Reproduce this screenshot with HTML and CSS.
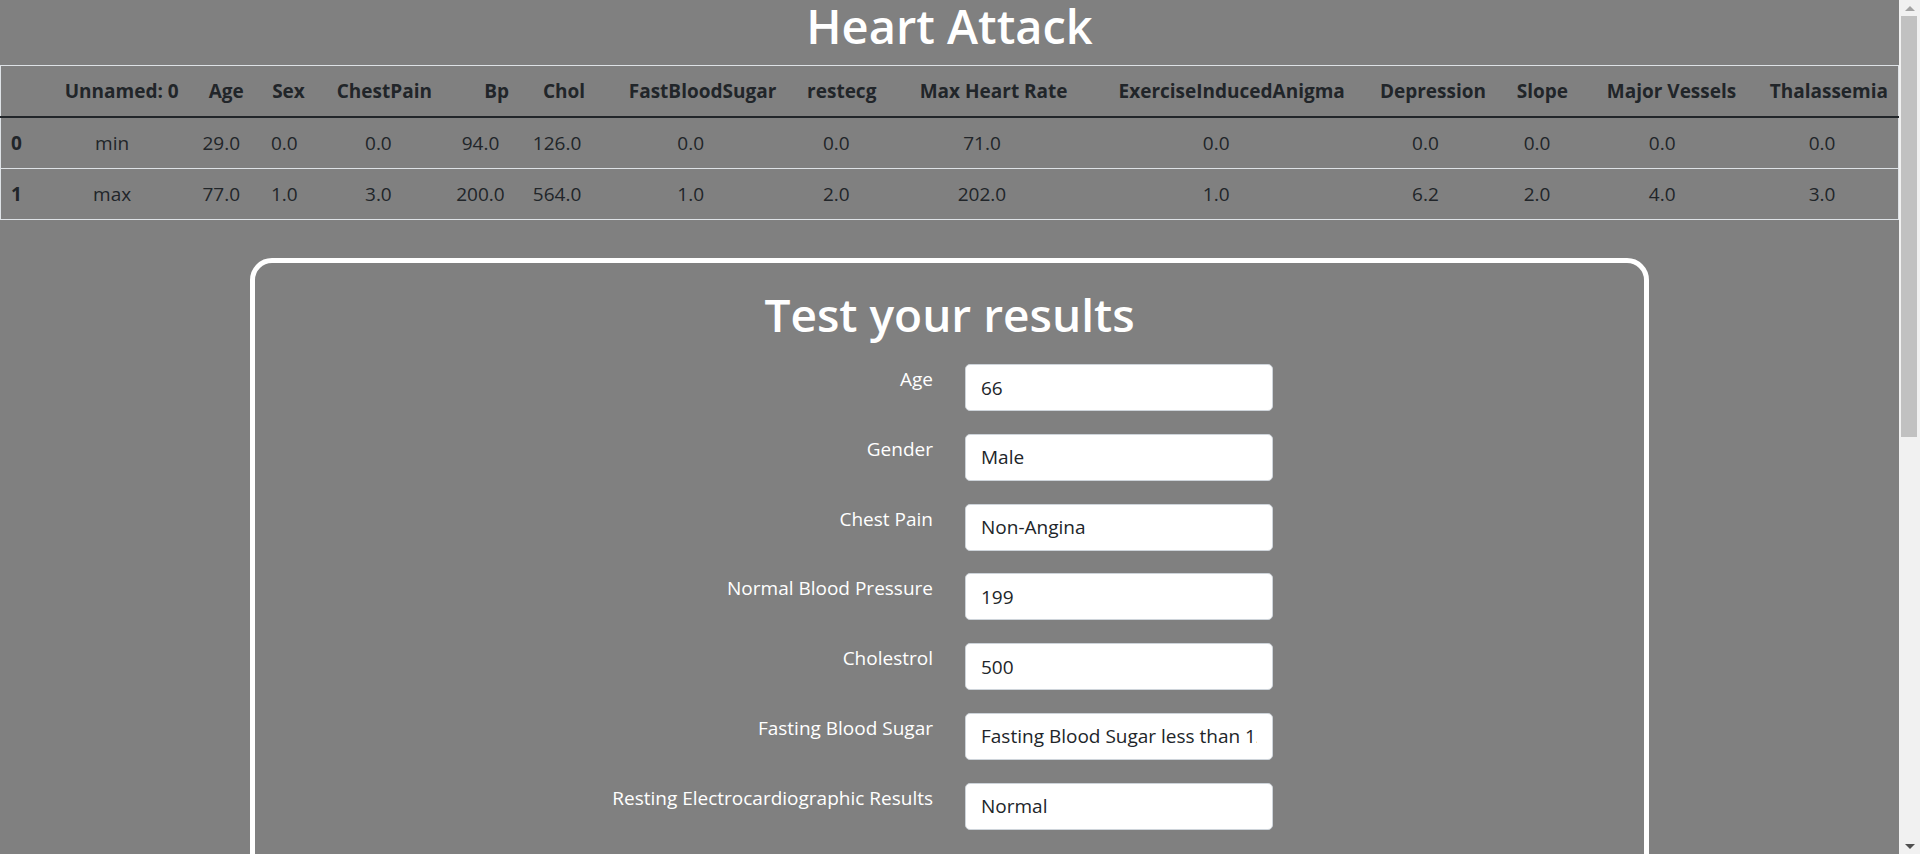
FILE: index.html
```html
<!DOCTYPE html>
<html lang="en">
<head>
<meta charset="utf-8">
<title>Heart Attack</title>
<link rel="stylesheet" href="styles.css">
</head>
<body>
<main class="page">
  <h1 class="page-title">Heart Attack</h1>
  <table class="data-table" border="1">
    <colgroup>
      <col class="c-idx"><col class="c-unnamed"><col class="c-age"><col class="c-sex"><col class="c-cp"><col class="c-bp"><col class="c-chol"><col class="c-fbs"><col class="c-rest"><col class="c-mhr"><col class="c-eia"><col class="c-dep"><col class="c-slope"><col class="c-mv"><col class="c-thal">
    </colgroup>
    <thead>
      <tr>
        <th></th><th>Unnamed: 0</th><th>Age</th><th>Sex</th><th>ChestPain</th><th>Bp</th><th>Chol</th><th>FastBloodSugar</th><th>restecg</th><th>Max Heart Rate</th><th>ExerciseInducedAnigma</th><th>Depression</th><th>Slope</th><th>Major Vessels</th><th>Thalassemia</th>
      </tr>
    </thead>
    <tbody>
      <tr>
        <th>0</th><td>min</td><td>29.0</td><td>0.0</td><td>0.0</td><td>94.0</td><td>126.0</td><td>0.0</td><td>0.0</td><td>71.0</td><td>0.0</td><td>0.0</td><td>0.0</td><td>0.0</td><td>0.0</td>
      </tr>
      <tr>
        <th>1</th><td>max</td><td>77.0</td><td>1.0</td><td>3.0</td><td>200.0</td><td>564.0</td><td>1.0</td><td>2.0</td><td>202.0</td><td>1.0</td><td>6.2</td><td>2.0</td><td>4.0</td><td>3.0</td>
      </tr>
    </tbody>
  </table>

  <section class="card">
    <h2 class="card-title">Test your results</h2>
    <form class="form-grid">
      <label class="form-label" for="age">Age</label>
      <input class="form-control" id="age" type="text" value="66">
      <label class="form-label" for="gender">Gender</label>
      <input class="form-control" id="gender" type="text" value="Male">
      <label class="form-label" for="cp">Chest Pain</label>
      <input class="form-control" id="cp" type="text" value="Non-Angina">
      <label class="form-label" for="bp">Normal Blood Pressure</label>
      <input class="form-control" id="bp" type="text" value="199">
      <label class="form-label" for="chol">Cholestrol</label>
      <input class="form-control" id="chol" type="text" value="500">
      <label class="form-label" for="fbs">Fasting Blood Sugar</label>
      <input class="form-control" id="fbs" type="text" value="Fasting Blood Sugar less than 120 mg/dl">
      <label class="form-label" for="ecg">Resting Electrocardiographic Results</label>
      <input class="form-control" id="ecg" type="text" value="Normal">
    </form>
  </section>
</main>

<div class="scrollbar" aria-hidden="true">
  <div class="sb-btn sb-up"><span class="tri-up"></span></div>
  <div class="sb-thumb"></div>
  <div class="sb-track"></div>
  <div class="sb-btn sb-down"><span class="tri-down"></span></div>
</div>
</body>
</html>
```

FILE: styles.css
```css
html {
  overflow: hidden;
  background: #808080;
}

body {
  margin: 0;
  background: #808080;
  font-family: "Open Sans", "Noto Sans", "Liberation Sans", sans-serif;
  font-size: 19px;
  line-height: 30px;
  color: #212529;
}

.page {
  width: 1899px;
  height: 854px;
  overflow: hidden;
}

.page-title {
  margin: 0 0 13px;
  height: 52px;
  text-align: center;
  color: #fff;
  font-size: 47px;
  font-weight: 600;
  line-height: 52px;
}

/* data table */
.data-table {
  width: 1899px;
  border-collapse: collapse;
  table-layout: fixed;
  border: 1px solid #dee2e6;
  color: #212529;
}

.data-table th,
.data-table td {
  padding: 10px;
  border: 0;
  border-bottom: 1px solid #dee2e6;
  line-height: 30px;
  white-space: nowrap;
}

.data-table thead th {
  text-align: right;
  font-weight: 700;
  border-bottom: 2px solid #212529;
}

.data-table tbody th {
  text-align: left;
  font-weight: 700;
}

.data-table tbody td {
  text-align: center;
  font-weight: 400;
}

.c-idx { width: 35px; }
.c-unnamed { width: 153px; }
.c-age { width: 65px; }
.c-sex { width: 61px; }
.c-cp { width: 127px; }
.c-bp { width: 77px; }
.c-chol { width: 76px; }
.c-fbs { width: 191px; }
.c-rest { width: 100px; }
.c-mhr { width: 191px; }
.c-eia { width: 277px; }
.c-dep { width: 141px; }
.c-slope { width: 82px; }
.c-mv { width: 168px; }
.c-thal { width: 152px; }

/* card */
.card {
  box-sizing: border-box;
  width: 1399px;
  margin: 38px auto 0;
  border: 5px solid #fff;
  border-radius: 22px;
  padding: 21px 0 120px;
}

.card-title {
  margin: 0 0 20px;
  text-align: center;
  color: #fff;
  font-size: 46px;
  font-weight: 600;
  line-height: 60px;
}

.form-grid {
  display: grid;
  grid-template-columns: 678px 308px;
  column-gap: 32px;
  row-gap: 22.8px;
  align-items: start;
}

.form-label {
  text-align: right;
  color: #fff;
  line-height: 30px;
}

.form-control {
  box-sizing: border-box;
  width: 308px;
  height: 47px;
  margin: 0;
  padding: 7px 15px;
  border: 1px solid #ced4da;
  border-radius: 5px;
  background: #fff;
  color: #212529;
  font-family: inherit;
  font-size: 19px;
  line-height: 30px;
}

/* scrollbar overlay */
.scrollbar {
  position: fixed;
  top: 0;
  right: 0;
  width: 21px;
  height: 854px;
  background: #f1f1f1;
  display: flex;
  flex-direction: column;
}

.sb-btn {
  height: 16px;
  display: flex;
  align-items: center;
  justify-content: center;
}

.tri-up {
  width: 0;
  height: 0;
  border-left: 5px solid transparent;
  border-right: 5px solid transparent;
  border-bottom: 5px solid #a3a3a3;
}

.tri-down {
  width: 0;
  height: 0;
  border-left: 5px solid transparent;
  border-right: 5px solid transparent;
  border-top: 5px solid #505050;
}

.sb-thumb {
  height: 421px;
  margin: 0 3px 0 2px;
  background: #c1c1c1;
}

.sb-track {
  flex: 1;
}
```
